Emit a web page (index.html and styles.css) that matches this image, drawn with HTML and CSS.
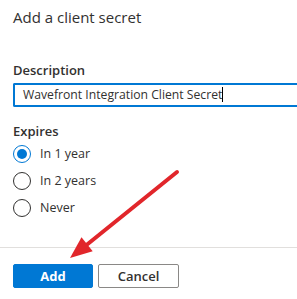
FILE: index.html
```html
<!DOCTYPE html>
<html lang="en">
<head>
    <meta charset="UTF-8">
    <title>Add a client secret</title>
    <link rel="stylesheet" href="styles.css">
</head>
<body>
    <div class="panel">
        <h2 class="title">Add a client secret</h2>

        <label class="label" for="description">Description</label>
        <div class="input" id="description">Wavefront Integration Client Secret<span class="caret"></span></div>

        <div class="label label-expires">Expires</div>
        <div class="radios">
            <div class="radio-row">
                <span class="radio checked"></span>
                <span class="radio-text">In 1 year</span>
            </div>
            <div class="radio-row">
                <span class="radio"></span>
                <span class="radio-text">In 2 years</span>
            </div>
            <div class="radio-row">
                <span class="radio"></span>
                <span class="radio-text">Never</span>
            </div>
        </div>
    </div>

    <div class="footer">
        <button class="btn btn-primary">Add</button>
        <button class="btn btn-default">Cancel</button>
    </div>

    <!-- annotation arrow pointing at the Add button -->
    <svg class="arrow" width="297" height="299" viewBox="0 0 297 299">
        <line x1="177" y1="172" x2="84" y2="247" stroke="#e1262b" stroke-width="4" stroke-linecap="round"/>
        <polygon points="70,258 81.5,237.2 92.7,251.2" fill="#e1262b"/>
    </svg>
</body>
</html>
```

FILE: styles.css
```css
body {
    margin: 0;
    background: #fff;
    font-family: 'Open Sans', sans-serif;
    color: #323130;
    overflow: hidden;
}
.panel {
    padding: 7px 0 0 13px;
}
.title {
    margin: 0;
    font-size: 15px;
    line-height: 20px;
    font-weight: 400;
    color: #323130;
}
.label {
    display: block;
    margin-top: 34px;
    font-size: 13px;
    line-height: 18px;
    font-weight: 600;
}
.input {
    margin-top: 4px;
    height: 20px;
    border: 2px solid #0078d4;
    border-right: none;
    border-radius: 2px 0 0 2px;
    padding: 0 8px;
    font-size: 12.2px;
    line-height: 20px;
    white-space: nowrap;
}
.caret {
    display: inline-block;
    width: 1px;
    height: 15px;
    background: #000;
    vertical-align: -3px;
}
.label-expires {
    margin-top: 15px;
}
.radio-row {
    display: flex;
    align-items: center;
    height: 27px;
}
.radio {
    box-sizing: border-box;
    width: 18px;
    height: 18px;
    border: 1px solid #323130;
    border-radius: 50%;
    margin-right: 9px;
    display: flex;
    align-items: center;
    justify-content: center;
}
.radio.checked {
    border-color: #0078d4;
}
.radio.checked::after {
    content: '';
    width: 10px;
    height: 10px;
    border-radius: 50%;
    background: #0078d4;
}
.radio-text {
    font-size: 12.5px;
}
.footer {
    margin-top: 26px;
    border-top: 1px solid #e1dfdd;
    padding: 16px 13px;
    display: flex;
    gap: 5px;
}
.btn {
    width: 80px;
    height: 24px;
    border-radius: 2px;
    font-family: 'Open Sans', sans-serif;
    font-size: 13px;
    font-weight: 600;
    padding: 0;
    cursor: pointer;
}
.btn-primary {
    background: #0078d4;
    border: 1px solid #0078d4;
    color: #fff;
    font-weight: 700;
}
.btn-default {
    width: 81px;
    background: #fff;
    border: 1px solid #8a8886;
    color: #323130;
}
.arrow {
    position: absolute;
    left: 0;
    top: 0;
    pointer-events: none;
}
```
